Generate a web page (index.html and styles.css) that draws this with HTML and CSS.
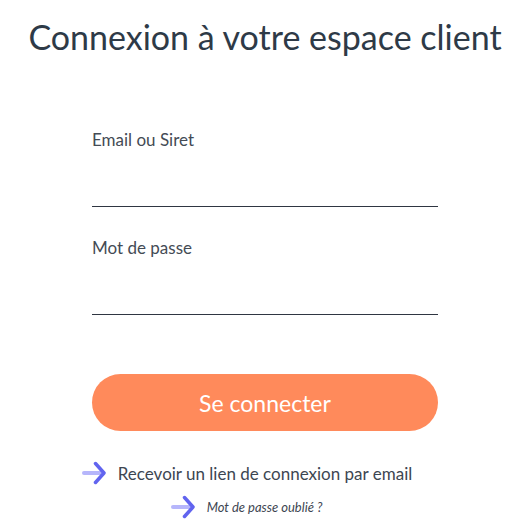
FILE: index.html
```html
<!DOCTYPE html>
<html lang="fr">
<head>
  <meta charset="UTF-8">
  <title>Connexion</title>
  <link rel="stylesheet" href="styles.css">
</head>
<body>
  <div class="login">
    <h1>Connexion à votre espace client</h1>
    <form class="login-form">
      <div class="field">
        <label for="login">Email ou Siret</label>
        <input type="text" id="login">
      </div>
      <div class="field">
        <label for="password">Mot de passe</label>
        <input type="password" id="password">
      </div>
      <button type="submit" class="btn-submit">Se connecter</button>
    </form>
    <a href="#" class="link link-main">
      <svg class="arrow" width="24" height="24" viewBox="0 0 24 24">
        <path d="M2 12 H19" stroke="#b6b6fb" stroke-width="4" stroke-linecap="round" fill="none"/>
        <path d="M13.5 2.5 L22 12 L13.5 21.5" stroke="#6164ef" stroke-width="3.5" stroke-linecap="round" stroke-linejoin="round" fill="none"/>
      </svg>
      <span>Recevoir un lien de connexion par email</span>
    </a>
    <a href="#" class="link link-small">
      <svg class="arrow" width="24" height="24" viewBox="0 0 24 24">
        <path d="M2 12 H19" stroke="#b6b6fb" stroke-width="4" stroke-linecap="round" fill="none"/>
        <path d="M13.5 2.5 L22 12 L13.5 21.5" stroke="#6164ef" stroke-width="3.5" stroke-linecap="round" stroke-linejoin="round" fill="none"/>
      </svg>
      <em>Mot de passe oublié ?</em>
    </a>
  </div>
</body>
</html>
```

FILE: styles.css
```css
body {
  margin: 0;
  font-family: Lato, "Open Sans", sans-serif;
  background: #fff;
  color: #3a4350;
}
.login {
  display: flex;
  flex-direction: column;
  align-items: center;
}
h1 {
  margin: 16px 0 0;
  font-size: 34px;
  font-weight: 400;
  color: #2e3a47;
  white-space: nowrap;
}
.login-form {
  width: 346px;
  margin-top: 72px;
}
.field {
  margin-bottom: 30px;
}
label {
  display: block;
  font-size: 17px;
  color: #444b55;
}
input {
  display: block;
  width: 100%;
  box-sizing: border-box;
  height: 57px;
  border: none;
  border-bottom: 1px solid #2f3642;
  outline: none;
  font-size: 17px;
  background: transparent;
}
.btn-submit {
  width: 100%;
  height: 57px;
  margin-top: 29px;
  border: none;
  border-radius: 29px;
  background: #ff8a5b;
  color: #fff;
  font-family: inherit;
  font-size: 23px;
  cursor: pointer;
}
.link {
  display: flex;
  align-items: center;
  gap: 12px;
  color: #3d4652;
  text-decoration: none;
}
.link .arrow {
  flex-shrink: 0;
  margin-left: -36px;
}
.link-main {
  margin-top: 30px;
  font-size: 17px;
}
.link-small {
  margin-top: 10px;
  font-size: 13px;
}
.link-small .arrow {
  margin-left: -37px;
}
```
